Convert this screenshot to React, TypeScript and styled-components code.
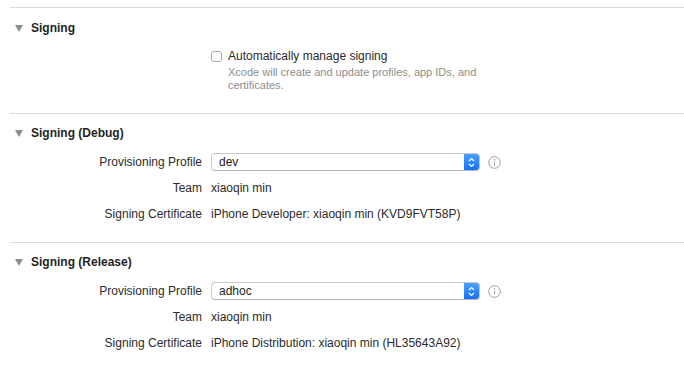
import React from 'react';
import styled, { createGlobalStyle } from 'styled-components';

interface IRow {
  label: string;
  value: string;
  popup?: boolean;
}

interface ISection {
  title: string;
  rows: IRow[];
}

const GlobalStyle = createGlobalStyle`
  html, body {
    margin: 0;
    padding: 0;
    background: #ffffff;
  }
  body {
    font-family: 'Liberation Sans', Arial, sans-serif;
    font-size: 12px;
    color: #262626;
  }
`;

const Page = styled.div`
  width: 684px;
  height: 367px;
  padding: 7px 0 0 10px;
  box-sizing: border-box;
  overflow: hidden;
`;

const Section = styled.section<{ $top: number; $bottom: number }>`
  border-top: 1px solid #dadada;
  padding: ${({ $top }) => $top}px 0 ${({ $bottom }) => $bottom}px 0;
`;

const Header = styled.div`
  display: flex;
  align-items: center;
  height: 20px;
  padding-left: 5px;
  font-weight: bold;
  color: #1f1f1f;
`;

const Disclosure = styled.span`
  width: 0;
  height: 0;
  border-left: 4px solid transparent;
  border-right: 4px solid transparent;
  border-top: 7px solid #8c8c8c;
  margin-right: 8px;
  margin-top: 1px;
`;

const Grid = styled.div`
  display: grid;
  grid-template-columns: 192px 1fr;
  column-gap: 9px;
  margin-top: 6px;
`;

const Label = styled.div`
  height: 26px;
  display: flex;
  align-items: center;
  justify-content: flex-end;
  color: #2b2b2b;
`;

const Value = styled.div`
  height: 26px;
  display: flex;
  align-items: center;
  color: #2b2b2b;
`;

const CheckWrap = styled.div`
  display: flex;
  align-items: flex-start;
  padding-top: 4px;
`;

const Checkbox = styled.span`
  width: 11px;
  height: 11px;
  border: 1px solid #a9a9a9;
  border-radius: 3px;
  background: #fff;
  box-sizing: border-box;
  margin: 3px 6px 0 0;
  flex: none;
`;

const CheckText = styled.div`
  line-height: 16px;
  color: #2b2b2b;
`;

const Hint = styled.div`
  font-size: 11px;
  line-height: 13px;
  color: #8d8d8d;
  max-width: 270px;
  margin-top: 2px;
`;

const Popup = styled.div`
  width: 269px;
  height: 18px;
  display: flex;
  align-items: stretch;
  border: 1px solid #c9c9c9;
  border-bottom-color: #b5b5b5;
  border-radius: 4px;
  box-sizing: border-box;
  background: #fff;
  overflow: hidden;
`;

const PopupText = styled.span`
  flex: 1;
  display: flex;
  align-items: center;
  padding-left: 7px;
  color: #222;
`;

const Stepper = styled.span`
  width: 15px;
  display: flex;
  align-items: center;
  justify-content: center;
  background: linear-gradient(#4ba2fd, #1670f5);
`;

const Info = styled.span`
  margin-left: 8px;
  display: flex;
  align-items: center;
`;

const sections: ISection[] = [
  {
    title: 'Signing (Debug)',
    rows: [
      { label: 'Provisioning Profile', value: 'dev', popup: true },
      { label: 'Team', value: 'xiaoqin min' },
      { label: 'Signing Certificate', value: 'iPhone Developer: xiaoqin min (KVD9FVT58P)' },
    ],
  },
  {
    title: 'Signing (Release)',
    rows: [
      { label: 'Provisioning Profile', value: 'adhoc', popup: true },
      { label: 'Team', value: 'xiaoqin min' },
      { label: 'Signing Certificate', value: 'iPhone Distribution: xiaoqin min (HL35643A92)' },
    ],
  },
];

const Chevrons = () => (
  <svg width='7' height='11' viewBox='0 0 7 11'>
    <path d='M1 4 L3.5 1.5 L6 4' stroke='#fff' strokeWidth='1.2' fill='none' />
    <path d='M1 7 L3.5 9.5 L6 7' stroke='#fff' strokeWidth='1.2' fill='none' />
  </svg>
);

const InfoIcon = () => (
  <svg width='13' height='13' viewBox='0 0 13 13'>
    <circle cx='6.5' cy='6.5' r='5.8' stroke='#a0a0a0' strokeWidth='1' fill='none' />
    <circle cx='6.5' cy='3.8' r='0.8' fill='#a0a0a0' />
    <rect x='6' y='5.4' width='1' height='4.2' fill='#a0a0a0' />
  </svg>
);

const App = () => {
  return (
    <>
      <GlobalStyle />
      <Page>
        <Section $top={10} $bottom={21}>
          <Header>
            <Disclosure />
            Signing
          </Header>
          <Grid>
            <div />
            <CheckWrap>
              <Checkbox />
              <div>
                <CheckText>Automatically manage signing</CheckText>
                <Hint>Xcode will create and update profiles, app IDs, and certificates.</Hint>
              </div>
            </CheckWrap>
          </Grid>
        </Section>

        {sections.map((s, i) => (
          <Section key={s.title} $top={9} $bottom={i === 0 ? 15 : 0}>
            <Header>
              <Disclosure />
              {s.title}
            </Header>
            <Grid>
              {s.rows.map((r) => (
                <React.Fragment key={r.label}>
                  <Label>{r.label}</Label>
                  <Value>
                    {r.popup ? (
                      <>
                        <Popup>
                          <PopupText>{r.value}</PopupText>
                          <Stepper>
                            <Chevrons />
                          </Stepper>
                        </Popup>
                        <Info>
                          <InfoIcon />
                        </Info>
                      </>
                    ) : (
                      r.value
                    )}
                  </Value>
                </React.Fragment>
              ))}
            </Grid>
          </Section>
        ))}
      </Page>
    </>
  );
};

export default App;
